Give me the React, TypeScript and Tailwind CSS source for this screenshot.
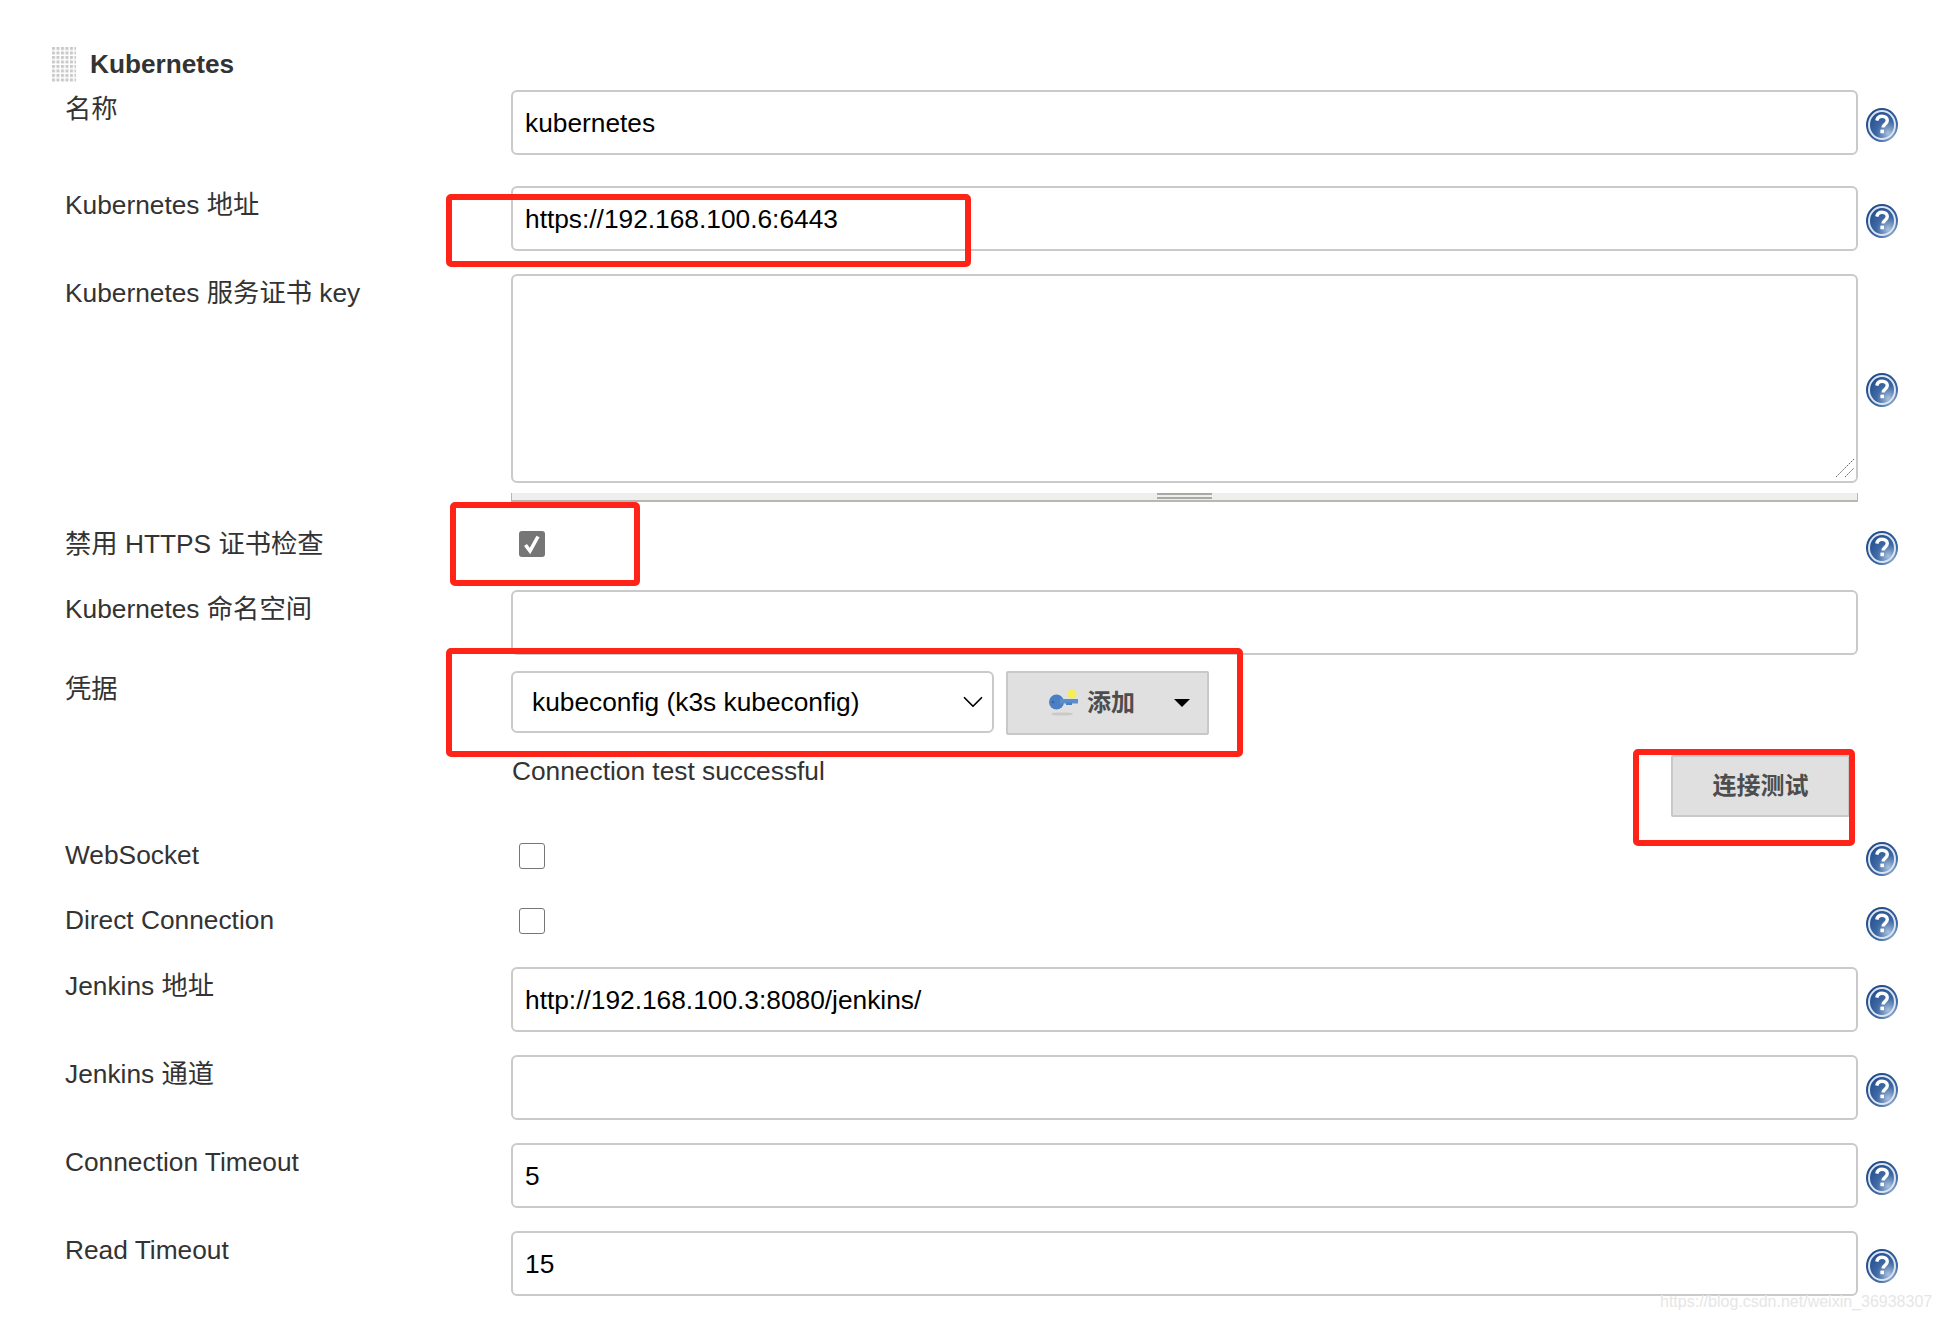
import { ReactNode } from 'react'
import { ChevronDown } from 'lucide-react'

function HelpIcon() {
  return (
    <svg width="32" height="34" viewBox="0 0 32 34" className="block">
      <defs>
        <radialGradient id="help-bg" cx="70%" cy="75%" r="80%">
          <stop offset="0%" stopColor="#a9c0dc" />
          <stop offset="45%" stopColor="#3f6aa5" />
          <stop offset="100%" stopColor="#1f4a8c" />
        </radialGradient>
      </defs>
      <ellipse cx="16" cy="17" rx="16" ry="17" fill="url(#help-bg)" />
      <ellipse cx="16" cy="17" rx="13" ry="14" fill="none" stroke="#dbe5f1" strokeWidth="2" />
      <path
        d="M10.8 12.6c.5-3 2.6-4.4 5.3-4.4 3 0 5.2 1.7 5.2 4.4 0 2-1.1 3-2.5 4-1.2.9-1.7 1.5-1.7 3"
        fill="none"
        stroke="#fff"
        strokeWidth="3.4"
      />
      <rect x="14.4" y="21.6" width="3.6" height="3.6" fill="#fff" />
    </svg>
  )
}

function KeyIcon() {
  return (
    <svg width="32" height="32" viewBox="0 0 32 32" className="block">
      <ellipse cx="14" cy="27" rx="11" ry="1.6" fill="#c9c9c9" />
      <circle cx="24" cy="7" r="4.5" fill="#f5ee55" />
      <circle cx="8.5" cy="15" r="7.5" fill="#4a7fc4" />
      <rect x="12" y="12" width="18" height="4.5" fill="#5b8dca" />
      <rect x="18" y="15.5" width="6" height="2.5" fill="#4a7fc4" />
      <circle cx="5" cy="15" r="1.3" fill="#3a659c" />
    </svg>
  )
}

function Grip() {
  return (
    <svg width="24" height="36" className="block">
      <defs>
        <pattern id="grip-dots" width="4.5" height="4.5" patternUnits="userSpaceOnUse">
          <rect width="3" height="3" fill="#c9c9c9" />
        </pattern>
      </defs>
      <rect width="24" height="36" fill="url(#grip-dots)" />
    </svg>
  )
}

function Row({
  label,
  children,
  help = true,
  className,
}: {
  label: string
  children?: ReactNode
  help?: boolean
  className: string
}) {
  return (
    <div className={`grid grid-cols-[445px_1347px_1fr] ${className}`}>
      <div className="-ml-px h-9 pt-px leading-9 text-[#333]">{label}</div>
      <div className="min-w-0">{children}</div>
      {help && (
        <div className="self-center pl-[8px] pt-[4px]">
          <HelpIcon />
        </div>
      )}
    </div>
  )
}

function TextInput({ value = '' }: { value?: string }) {
  return (
    <input
      readOnly
      defaultValue={value}
      className="block h-full w-full rounded-[6px] border-2 border-[#cacaca] bg-white px-[12px] pt-[2px] text-black outline-none"
    />
  )
}

function CheckBox({ checked = false }: { checked?: boolean }) {
  return checked ? (
    <div className="ml-[8px] flex h-[26px] w-[26px] items-center justify-center rounded-[3px] bg-[#767676]">
      <svg width="22" height="24" viewBox="0 0 22 24">
        <path d="M4.5 13l4.5 6L17 4.5" fill="none" stroke="#fff" strokeWidth="3.6" />
      </svg>
    </div>
  ) : (
    <div className="ml-[8px] h-[26px] w-[26px] rounded-[3px] border border-[#767676] bg-white" />
  )
}

function RedBox({ className }: { className: string }) {
  return <div className={`pointer-events-none absolute rounded-[5px] border-[6px] border-[#ff2318] ${className}`} />
}

export default function App() {
  return (
    <div
      className="relative h-[1319px] overflow-hidden bg-white pl-[66px] text-[26.3px]"
      style={{ fontFamily: '"Liberation Sans", "Noto Sans CJK SC", sans-serif' }}
    >
      <div className="flex h-[90px] pt-[46px] -ml-[14px]">
        <div className="pt-px">
          <Grip />
        </div>
        <span className="ml-[14px] text-[26.2px] font-bold leading-9 text-[#333]">Kubernetes</span>
      </div>

      <Row label="名称" className="h-[65px]">
        <TextInput value="kubernetes" />
      </Row>
      <Row label="Kubernetes 地址" className="mt-[31px] h-[65px]">
        <TextInput value="https://192.168.100.6:6443" />
      </Row>
      <Row label="Kubernetes 服务证书 key" className="mt-[23px] h-[228px]">
        <div className="relative">
          <textarea
            readOnly
            className="block h-[209px] w-full resize-none rounded-[6px] border-2 border-[#cacaca] bg-white outline-none"
          />
          <svg width="20" height="20" viewBox="0 0 20 20" className="absolute bottom-[5px] right-[3px]">
            <path d="M1 19L19 1M10 19l9-9" stroke="#666" strokeWidth="1" strokeDasharray="2 1" fill="none" />
          </svg>
        </div>
        <div className="mt-[10px] flex h-[9px] items-start justify-center border-x border-b-2 border-[#b8b8b0] bg-[#eeeeee]">
          <div className="h-[6px] w-[55px] border-y-2 border-[#aaaaa4]" />
        </div>
      </Row>
      <Row label="禁用 HTTPS 证书检查" className="mt-[23px] h-[41px]">
        <div className="pt-[6px]">
          <CheckBox checked />
        </div>
      </Row>
      <Row label="Kubernetes 命名空间" help={false} className="mt-[24px] h-[65px]">
        <TextInput />
      </Row>
      <Row label="凭据" help={false} className="mt-[15px] h-[65px]">
        <div className="flex gap-[12px] pt-px">
          <div className="relative h-[62px] w-[483px]">
            <select className="block h-full w-full appearance-none rounded-[6px] border-2 border-[#cacaca] bg-white pl-[19px] pt-[2px] text-black outline-none">
              <option>kubeconfig (k3s kubeconfig)</option>
            </select>
            <ChevronDown
              size={34}
              strokeWidth={1.2}
              className="pointer-events-none absolute right-[4px] top-[14px] text-black"
            />
          </div>
          <div className="flex h-[64px] w-[203px] items-center rounded-[2px] border-2 border-[#c8c8c8] bg-[#e0e0e0] pl-[40px] text-[24px] font-bold text-[#4d4d4d]">
            <KeyIcon />
            <span className="ml-[7px]">添加</span>
            <div className="ml-[39px] h-0 w-0 border-x-[8px] border-t-[8px] border-x-transparent border-t-black" />
          </div>
        </div>
      </Row>
      <Row label="" help={false} className="mt-[18px] h-[64px]">
        <div className="flex h-full items-start justify-between">
          <span className="pl-px leading-9 text-[#333]">Connection test successful</span>
          <div className="mr-[8px] mt-[2px] flex h-[62px] w-[179px] items-center justify-center rounded-[2px] border-2 border-[#c8c8c8] bg-[#e0e0e0] text-[24px] font-bold text-[#4d4d4d]">
            连接测试
          </div>
        </div>
      </Row>
      <Row label="WebSocket" className="mt-[19px] h-[42px]">
        <div className="pt-[7px]">
          <CheckBox />
        </div>
      </Row>
      <Row label="Direct Connection" className="mt-[23px] h-[42px]">
        <div className="pt-[7px]">
          <CheckBox />
        </div>
      </Row>
      <Row label="Jenkins 地址" className="mt-[24px] h-[65px]">
        <TextInput value="http://192.168.100.3:8080/jenkins/" />
      </Row>
      <Row label="Jenkins 通道" className="mt-[23px] h-[65px]">
        <TextInput />
      </Row>
      <Row label="Connection Timeout" className="mt-[23px] h-[65px]">
        <TextInput value="5" />
      </Row>
      <Row label="Read Timeout" className="mt-[23px] h-[65px]">
        <TextInput value="15" />
      </Row>
      <div className="ml-[445px] mt-[23px] h-px w-[1347px] bg-[#dddddd]" />

      <RedBox className="left-[446px] top-[194px] h-[73px] w-[525px]" />
      <RedBox className="left-[450px] top-[502px] h-[84px] w-[190px]" />
      <RedBox className="left-[446px] top-[648px] h-[109px] w-[797px]" />
      <RedBox className="left-[1633px] top-[749px] h-[97px] w-[222px]" />
      <div className="absolute left-[1660px] top-[1293px] whitespace-nowrap text-[16px] leading-[18px] text-[#e6e6e6]">
        https://blog.csdn.net/weixin_36938307
      </div>
    </div>
  )
}
